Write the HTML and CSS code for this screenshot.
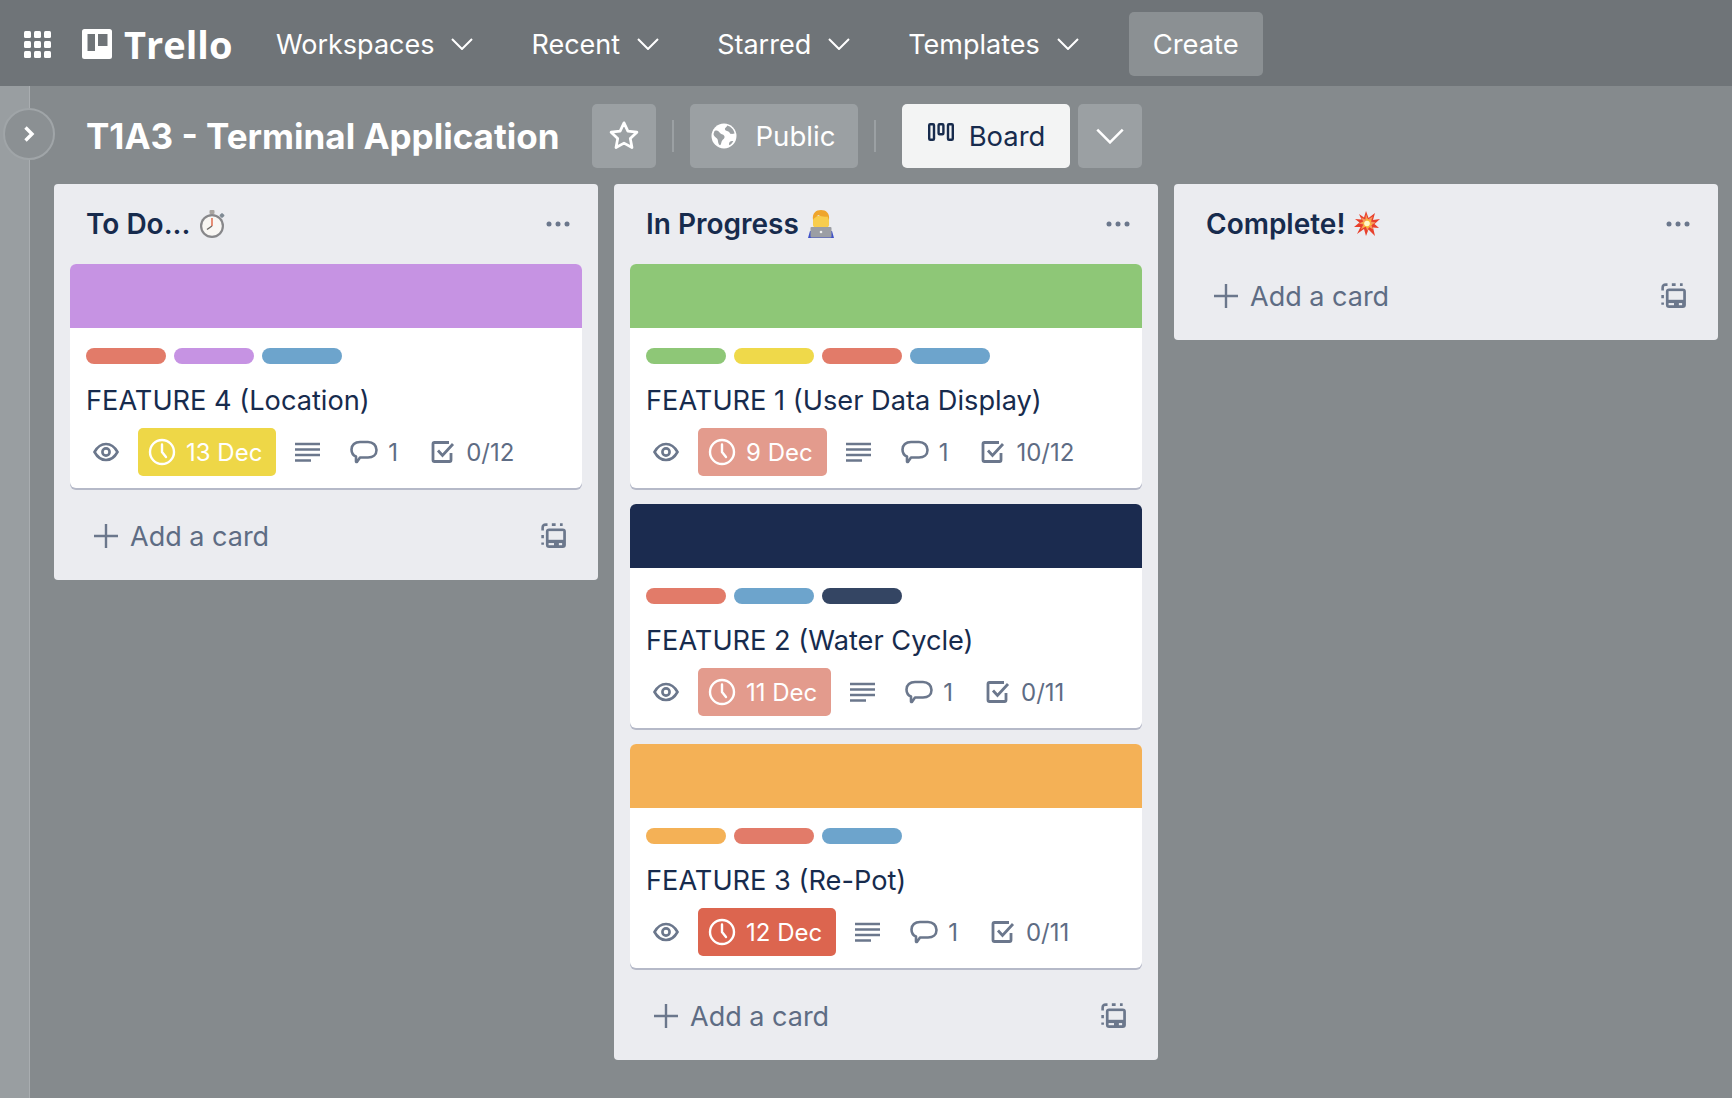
FILE: index.html
```html
<!DOCTYPE html>
<html lang="en">
<head>
<meta charset="utf-8">
<title>T1A3 - Terminal Application | Trello</title>
<link rel="stylesheet" href="styles.css">
</head>
<body>
<svg class="sprite" width="0" height="0">
  <symbol id="chev" viewBox="0 0 22 12"><path d="M1 1l10 10L21 1" fill="none" stroke="currentColor" stroke-width="2"/></symbol>
  <symbol id="eye" viewBox="0 0 26 20"><path d="M1.500 10C4.500 4.600 8.500 2 13 2s8.500 2.600 11.500 8c-3 5.400-7 8-11.500 8S4.500 15.400 1.500 10z" fill="none" stroke="currentColor" stroke-width="2.600"/><circle cx="13" cy="10" r="3.600" fill="none" stroke="currentColor" stroke-width="2.600"/></symbol>
  <symbol id="clock" viewBox="0 0 28 28"><circle cx="14" cy="14" r="12" fill="none" stroke="currentColor" stroke-width="2.400"/><path d="M14 6.500V14l4 5" fill="none" stroke="currentColor" stroke-width="2.400" stroke-linecap="round"/></symbol>
  <symbol id="lines" viewBox="0 0 25 20"><path d="M0 2h25M0 7.500h25M0 13h25M0 18.500h16" fill="none" stroke="currentColor" stroke-width="2.600"/></symbol>
  <symbol id="comment" viewBox="0 0 28 24"><path d="M10 17.500h8c5 0 8.500-2.800 8.500-7.500S23 2 18 2h-8C5 2 1.500 5 1.500 9.500c0 3.500 2 6 4.500 7v5c0 .5.500.7.900.4z" fill="none" stroke="currentColor" stroke-width="2.600" stroke-linejoin="round"/></symbol>
  <symbol id="check" viewBox="0 0 24 24"><path d="M20 13v7a1.500 1.500 0 0 1-1.500 1.500h-15A1.500 1.500 0 0 1 2 20V4a1.500 1.500 0 0 1 1.500-1.500H18" fill="none" stroke="currentColor" stroke-width="2.800"/><path d="M7 10.500l4.500 5L22 4" fill="none" stroke="currentColor" stroke-width="2.800"/></symbol>
  <symbol id="dots" viewBox="0 0 24 6"><circle cx="3" cy="3" r="2.500" fill="currentColor"/><circle cx="12" cy="3" r="2.500" fill="currentColor"/><circle cx="21" cy="3" r="2.500" fill="currentColor"/></symbol>
  <symbol id="plus" viewBox="0 0 24 24"><path d="M12 0v24M0 12h24" fill="none" stroke="currentColor" stroke-width="2.400"/></symbol>
  <symbol id="tpl" viewBox="0 0 24 24"><rect x="4.500" y="5" width="18.500" height="18" rx="3" fill="currentColor"/><rect x="7" y="7.500" width="13.500" height="8" fill="#ebecf0"/><rect x="7" y="18.500" width="5" height="2" fill="#ebecf0"/><rect x="16.500" y="18.500" width="3" height="2" fill="#ebecf0"/><path d="M1.500 20v-2M1.500 14v-3M1.500 7V4.500Q1.500 1.500 4.500 1.500H6M10 1.500h3.500M17.500 1.500H20" fill="none" stroke="currentColor" stroke-width="2.400"/></symbol>
</svg>

<header class="nav">
  <svg class="apps" viewBox="0 0 28 27"><g fill="#fff"><rect width="7" height="7" rx="1.500"/><rect x="10" width="7" height="7" rx="1.500"/><rect x="20" width="7" height="7" rx="1.500"/><rect y="10" width="7" height="7" rx="1.500"/><rect x="10" y="10" width="7" height="7" rx="1.500"/><rect x="20" y="10" width="7" height="7" rx="1.500"/><rect y="20" width="7" height="7" rx="1.500"/><rect x="10" y="20" width="7" height="7" rx="1.500"/><rect x="20" y="20" width="7" height="7" rx="1.500"/></g></svg>
  <div class="logo">
    <svg class="logo-mark" viewBox="0 0 30 30"><path fill="#fff" fill-rule="evenodd" d="M2.500 0h25A2.500 2.500 0 0 1 30 2.500v25a2.500 2.500 0 0 1-2.500 2.500h-25A2.500 2.500 0 0 1 0 27.500v-25A2.500 2.500 0 0 1 2.500 0zM5.500 5v17h7.500V5zM16 5v12h9.500V5z"/></svg>
    <span class="logo-text">Trello</span>
  </div>
  <nav class="menu">
    <span class="menu-item">Workspaces <svg class="chev"><use href="#chev"/></svg></span>
    <span class="menu-item">Recent <svg class="chev"><use href="#chev"/></svg></span>
    <span class="menu-item">Starred <svg class="chev"><use href="#chev"/></svg></span>
    <span class="menu-item">Templates <svg class="chev"><use href="#chev"/></svg></span>
  </nav>
  <button class="create">Create</button>
</header>

<div class="page">
  <aside class="strip">
    <div class="toggle"><svg viewBox="0 0 12 18" class="toggle-icon"><path d="M2.500 2.500L9 9l-6.500 6.500" fill="none" stroke="#fff" stroke-width="3.400"/></svg></div>
  </aside>
  <main class="content">
    <div class="board-bar">
      <h1 class="board-title">T1A3 - Terminal Application</h1>
      <button class="bar-btn square"><svg class="star" viewBox="0 0 28 28"><path d="M14 2.500l3.400 7.300 7.900.9-5.800 5.500 1.500 7.900-7-3.900-7 3.900 1.500-7.900L2.700 10.700l7.900-.9z" fill="none" stroke="#fff" stroke-width="2.400" stroke-linejoin="round"/></svg></button>
      <span class="divider"></span>
      <button class="bar-btn public"><svg class="globe" viewBox="0 0 26 26"><circle cx="13" cy="13" r="12.500" fill="#fff"/><path d="M3.500 8c3-1 4 0 5.500 2s4 1 4.500 3.500-2.500 3-3 5.500-1 3.500-2 3c-2-2-1-5-2.500-6.500S2.500 13 2.500 11zM16 2.500c0 2-2.500 2-2 4s3.500 1 4.500 3 3 1.500 5 1c-.5-4-3.500-7-7.500-8zM21 18c-1.500 0-3 1-3 3 0 .5.200 1 .500 1.300 1.500-1 3-2.500 3.800-4.300z" fill="#9ba0a3"/></svg>Public</button>
      <span class="divider"></span>
      <button class="bar-btn board"><svg class="board-icon" viewBox="0 0 26 18"><g fill="none" stroke="#172b4d" stroke-width="2.400"><rect x="1.200" y="1.200" width="4.800" height="15.600" rx="1"/><rect x="10.600" y="1.200" width="4.800" height="10" rx="1"/><rect x="20" y="1.200" width="4.800" height="15.600" rx="1"/></g></svg>Board</button>
      <button class="bar-btn square more"><svg class="chev-lg"><use href="#chev"/></svg></button>
    </div>

    <div class="lists">
      <section class="list">
        <header class="list-head">
          <h2 class="list-title">To Do... <svg class="emoji" viewBox="0 0 26 28"><rect x="10.500" y="0" width="5" height="4" rx="1" fill="#a8a4a0"/><rect x="21" y="3.500" width="4" height="4" rx="1" transform="rotate(45 23 5.500)" fill="#7f8a94"/><circle cx="13" cy="16" r="12" fill="#87878a"/><circle cx="13" cy="16" r="9.800" fill="#f8f6f3"/><path d="M13 16V8" stroke="#e0623f" stroke-width="1.400"/><path d="M13 16l-5 3.500" stroke="#6e6a66" stroke-width="1.500"/></svg></h2>
          <svg class="list-menu"><use href="#dots"/></svg>
        </header>
        <article class="card">
          <div class="cover purple"></div>
          <div class="card-body">
            <div class="labels"><span class="label red"></span><span class="label purple"></span><span class="label blue"></span></div>
            <p class="card-title">FEATURE 4 (Location)</p>
            <div class="meta">
              <span class="eye-box"><svg class="i-eye"><use href="#eye"/></svg></span>
              <span class="due due-yellow"><svg class="i-clock"><use href="#clock"/></svg>13 Dec</span>
              <span class="lines-box"><svg class="i-lines"><use href="#lines"/></svg></span>
              <span class="count"><svg class="i-comment"><use href="#comment"/></svg>1</span>
              <span class="count"><svg class="i-check"><use href="#check"/></svg>0/12</span>
            </div>
          </div>
        </article>
        <footer class="list-foot"><span class="add"><svg class="i-plus"><use href="#plus"/></svg>Add a card</span><svg class="i-tpl"><use href="#tpl"/></svg></footer>
      </section>

      <section class="list">
        <header class="list-head">
          <h2 class="list-title">In Progress <svg class="emoji" viewBox="0 0 26 28"><path d="M0 28l2-7h22l2 7z" fill="#3f52c8"/><path d="M5 6h16v9c0 2-3 4-8 4s-8-2-8-4z" fill="#f8cd4d"/><path d="M5 10C4 3 8 0 13 0s9 3 8 10l-1.500-3.500c-3 .5-7 0-9.500-1.500-1 2-3.500 2-5 5z" fill="#efa52c"/><rect x="2.500" y="17" width="21" height="10.500" rx="1" fill="#9b9ea4"/><circle cx="13" cy="22" r="1.300" fill="#f0f0f0"/></svg></h2>
          <svg class="list-menu"><use href="#dots"/></svg>
        </header>
        <article class="card">
          <div class="cover green"></div>
          <div class="card-body">
            <div class="labels"><span class="label green"></span><span class="label yellow"></span><span class="label red"></span><span class="label blue"></span></div>
            <p class="card-title">FEATURE 1 (User Data Display)</p>
            <div class="meta">
              <span class="eye-box"><svg class="i-eye"><use href="#eye"/></svg></span>
              <span class="due due-pink"><svg class="i-clock"><use href="#clock"/></svg>9 Dec</span>
              <span class="lines-box"><svg class="i-lines"><use href="#lines"/></svg></span>
              <span class="count"><svg class="i-comment"><use href="#comment"/></svg>1</span>
              <span class="count"><svg class="i-check"><use href="#check"/></svg>10/12</span>
            </div>
          </div>
        </article>
        <article class="card">
          <div class="cover navy"></div>
          <div class="card-body">
            <div class="labels"><span class="label red"></span><span class="label blue"></span><span class="label slate"></span></div>
            <p class="card-title">FEATURE 2 (Water Cycle)</p>
            <div class="meta">
              <span class="eye-box"><svg class="i-eye"><use href="#eye"/></svg></span>
              <span class="due due-pink"><svg class="i-clock"><use href="#clock"/></svg>11 Dec</span>
              <span class="lines-box"><svg class="i-lines"><use href="#lines"/></svg></span>
              <span class="count"><svg class="i-comment"><use href="#comment"/></svg>1</span>
              <span class="count"><svg class="i-check"><use href="#check"/></svg>0/11</span>
            </div>
          </div>
        </article>
        <article class="card">
          <div class="cover orange"></div>
          <div class="card-body">
            <div class="labels"><span class="label orange"></span><span class="label red"></span><span class="label blue"></span></div>
            <p class="card-title">FEATURE 3 (Re-Pot)</p>
            <div class="meta">
              <span class="eye-box"><svg class="i-eye"><use href="#eye"/></svg></span>
              <span class="due due-red"><svg class="i-clock"><use href="#clock"/></svg>12 Dec</span>
              <span class="lines-box"><svg class="i-lines"><use href="#lines"/></svg></span>
              <span class="count"><svg class="i-comment"><use href="#comment"/></svg>1</span>
              <span class="count"><svg class="i-check"><use href="#check"/></svg>0/11</span>
            </div>
          </div>
        </article>
        <footer class="list-foot"><span class="add"><svg class="i-plus"><use href="#plus"/></svg>Add a card</span><svg class="i-tpl"><use href="#tpl"/></svg></footer>
      </section>

      <section class="list">
        <header class="list-head">
          <h2 class="list-title">Complete! <svg class="emoji" viewBox="0 0 26 26"><path d="M12 0l2.500 7L21 2l-2 7 7-1-5.500 5 4.500 4-6-.5 2 8.500-6.500-6.500L12 25l-2-7-7 5 3.500-7L0 16l5.500-4.500L1 8l6.500.5L5 3l5 3.500z" fill="#e8402c"/><path d="M12 3l1.800 5.500 5-3-2 5 5 1-4.500 2.500 2 4.500-4.500-2.500-1.500 4-1.500-4.500-5 3 2.500-5-4.500-1 4.500-2-2.500-4 4.500 2z" fill="#f69a5c"/><path d="M13 7l1.500 2.500 3-.5-1.500 3 2.500 2-3.500.5-.5 3-2.500-2-3 1 1.500-3-2.500-2 3.500-.5z" fill="#fbc02d"/><circle cx="13" cy="12.500" r="2.800" fill="#fff8c8"/></svg></h2>
          <svg class="list-menu"><use href="#dots"/></svg>
        </header>
        <footer class="list-foot"><span class="add"><svg class="i-plus"><use href="#plus"/></svg>Add a card</span><svg class="i-tpl"><use href="#tpl"/></svg></footer>
      </section>
    </div>
  </main>
</div>
</body>
</html>
```

FILE: styles.css
```css
* { box-sizing: border-box; }
html, body { margin: 0; height: 100%; }
body {
  font-family: Inter, "Liberation Sans", sans-serif;
  background: #858a8d;
  color: #172b4d;
  overflow: hidden;
  display: flex;
  flex-direction: column;
}
.sprite { position: absolute; }
button { font: inherit; border: 0; cursor: pointer; }

.nav {
  height: 86px;
  flex: none;
  background: #6f7478;
  display: flex;
  align-items: center;
  padding: 2px 0 0 24px;
  color: #fff;
}
.apps { width: 28px; height: 27px; flex: none; }
.logo { display: flex; align-items: center; margin-left: 30px; width: 194px; }
.logo-mark { width: 30px; height: 30px; flex: none; }
.logo-text {
  font-family: "Open Sans", sans-serif;
  font-weight: 700;
  font-size: 38px;
  line-height: 40px;
  margin-left: 12px;
}
.menu { display: flex; gap: 58px; font-size: 27px; }
.menu-item { display: flex; align-items: center; gap: 17px; line-height: 40px; padding-top: 2px; }
.chev { width: 22px; height: 12px; color: #fff; flex: none; margin-top: -2px; }
.create {
  margin-left: 50px;
  width: 134px;
  height: 64px;
  border-radius: 5px;
  background: #8b9093;
  color: #fff;
  font-size: 27.400px;
}

.page { flex: 1; display: flex; min-height: 0; }
.strip {
  width: 30px;
  flex: none;
  background: #999ea1;
  border-right: 1px solid #a9adb0;
  position: relative;
}
.toggle {
  position: absolute;
  left: 3px;
  top: 22px;
  width: 52px;
  height: 52px;
  border-radius: 50%;
  background: #8b9093;
  border: 2px solid #a0a5a8;
  display: flex;
  align-items: center;
  justify-content: center;
}
.toggle-icon { width: 12px; height: 18px; }

.content { flex: 1; min-width: 0; }
.board-bar {
  height: 98px;
  padding: 18px 0 16px 56px;
  display: flex;
  align-items: center;
}
.board-title {
  margin: 0 33px 0 0;
  font-size: 35px;
  font-weight: 700;
  color: #fff;
  line-height: 64px;
  white-space: nowrap;
}
.bar-btn {
  height: 64px;
  border-radius: 5px;
  background: #9ba0a3;
  color: #fff;
  font-size: 27.600px;
  display: flex;
  align-items: center;
  justify-content: center;
  padding: 0;
}
.square { width: 64px; }
.star { width: 32px; height: 32px; }
.divider { width: 2px; height: 32px; background: #9ba0a3; margin: 0 16px; }
.public { width: 168px; gap: 18px; padding-right: 2px; }
.globe { width: 26px; height: 26px; }
.board { width: 168px; gap: 15px; background: #f3f4f4; color: #172b4d; margin-left: 10px; font-size: 27.400px; }
.board-icon { width: 26px; height: 18px; margin-top: -8px; }
.more { margin-left: 8px; }
.chev-lg { width: 28px; height: 16px; color: #fff; }

.lists {
  display: flex;
  align-items: flex-start;
  gap: 16px;
  margin-left: 24px;
}
.list {
  width: 544px;
  flex: none;
  background: #ebecf0;
  border-radius: 4px;
  padding: 0 16px;
}
.list-head {
  height: 80px;
  display: flex;
  align-items: center;
  justify-content: space-between;
  padding: 0 16px;
}
.list-title {
  margin: 0;
  font-size: 28px;
  font-weight: 600;
  line-height: 40px;
  display: flex;
  align-items: center;
  gap: 9px;
}
.emoji { width: 26px; height: 28px; flex: none; }
.list-menu { width: 24px; height: 6px; color: #6b778c; margin-right: -4px; }

.card {
  background: #fff;
  border-radius: 6px;
  overflow: hidden;
  box-shadow: 0 2px 0 #b5b9c8;
  margin-bottom: 16px;
}
.cover { height: 64px; }
.purple { background: #c693e3; }
.green { background: #8ec777; }
.navy { background: #1b2b4f; }
.orange { background: #f4b156; }
.red { background: #e27b69; }
.blue { background: #6da4cc; }
.yellow { background: #efd94a; }
.slate { background: #344563; }

.card-body { padding: 20px 16px 12px; }
.labels { display: flex; gap: 8px; }
.label { width: 80px; height: 16px; border-radius: 8px; }
.card-title {
  margin: 0;
  padding-top: 17px;
  font-size: 27.200px;
  line-height: 40px;
  height: 64px;
}
.meta {
  display: flex;
  align-items: center;
  height: 48px;
  font-size: 24px;
  color: #5e6c84;
}
.meta svg { flex: none; }
.eye-box { width: 52px; padding-left: 7px; display: flex; align-items: center; }
.i-eye { width: 26px; height: 20px; color: #6b778c; }
.due {
  height: 48px;
  border-radius: 5px;
  color: #fff;
  display: flex;
  align-items: center;
  gap: 10px;
  padding: 0 14px 0 10px;
}
.i-clock { width: 28px; height: 28px; }
.due-yellow { background: #eed747; }
.due-pink { background: #e39b8d; }
.due-red { background: #dc654f; }
.lines-box { width: 74px; padding-left: 19px; display: flex; align-items: center; }
.i-lines { width: 25px; height: 20px; color: #6b778c; }
.count { display: flex; align-items: center; margin-right: 33px; gap: 10px; }
.i-comment { width: 28px; height: 24px; color: #6b778c; }
.i-check { width: 24px; height: 24px; color: #6b778c; margin-right: 1px; }

.list-foot {
  height: 76px;
  padding: 0 15px 12px 24px;
  display: flex;
  align-items: center;
  justify-content: space-between;
  color: #5e6c84;
}
.add { display: flex; align-items: center; gap: 12px; font-size: 27px; line-height: 40px; padding-top: 2px; }
.i-plus { width: 24px; height: 24px; color: #6b778c; margin-top: -2px; }
.i-tpl { width: 26px; height: 26px; color: #6b778c; }
```
